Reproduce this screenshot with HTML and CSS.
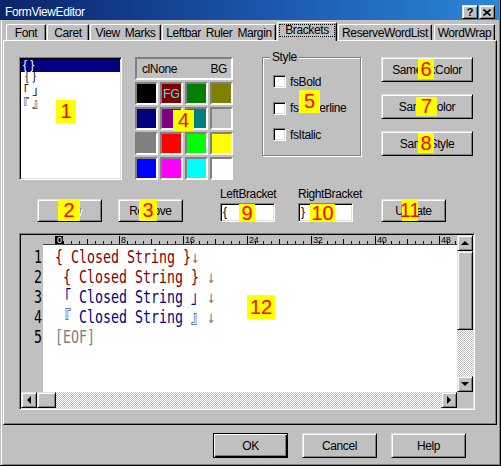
FILE: index.html
```html
<!DOCTYPE html>
<html lang="en">
<head>
    <meta charset="UTF-8">
    <title>FormViewEditor</title>
    <link rel="stylesheet" href="styles.css">
</head>
<body>
<div class="window">
    <div class="titlebar">
        <span class="title">FormViewEditor</span>
        <span class="cap-btn raised">?</span>
        <span class="cap-btn raised">
            <svg width="8" height="7" viewBox="0 0 8 7"><path d="M0.5 0.5 L7.5 6.5 M7.5 0.5 L0.5 6.5" stroke="#000" stroke-width="1.6" fill="none"/></svg>
        </span>
    </div>

    <div class="tabs">
        <div class="tab tab-font">Font</div>
        <div class="tab tab-caret">Caret</div>
        <div class="tab tab-marks">View Marks</div>
        <div class="tab tab-margin">Leftbar Ruler Margin</div>
        <div class="tab tab-brackets tab-on"><span class="focus">Brackets</span></div>
        <div class="tab tab-words">ReserveWordList</div>
        <div class="tab tab-wrap">WordWrap</div>
    </div>

    <div class="page">
        <div class="top-row">
            <div class="listbox sunken">
                <div class="item item-on">{ }</div>
                <div class="item item-cjk">｛ ｝</div>
                <div class="item item-cjk">「 」</div>
                <div class="item item-cjk">『 』</div>
            </div>

            <div class="palette">
                <div class="palette-head"><span>clNone</span><span>BG</span></div>
                <div class="swatches">
                    <div class="swatch sw-black"></div>
                    <div class="swatch sw-maroon">FG</div>
                    <div class="swatch sw-green"></div>
                    <div class="swatch sw-olive"></div>
                    <div class="swatch sw-navy"></div>
                    <div class="swatch sw-purple"></div>
                    <div class="swatch sw-teal"></div>
                    <div class="swatch sw-silver"></div>
                    <div class="swatch sw-gray"></div>
                    <div class="swatch sw-red"></div>
                    <div class="swatch sw-lime"></div>
                    <div class="swatch sw-yellow"></div>
                    <div class="swatch sw-blue"></div>
                    <div class="swatch sw-fuchsia"></div>
                    <div class="swatch sw-aqua"></div>
                    <div class="swatch sw-white"></div>
                </div>
            </div>

            <div class="group">
                <span class="group-title">Style</span>
                <div class="check"><span class="check-box"></span>fsBold</div>
                <div class="check"><span class="check-box"></span>fsUnderline</div>
                <div class="check"><span class="check-box"></span>fsItalic</div>
            </div>

            <div class="side-buttons">
                <div class="btn raised">SameBkColor</div>
                <div class="btn raised">SameColor</div>
                <div class="btn raised">SameStyle</div>
            </div>
        </div>

        <div class="mid-row">
            <div class="btn raised btn-new disabled">New</div>
            <div class="btn raised btn-remove">Remove</div>
            <div class="field field-left">
                <div class="field-label">LeftBracket</div>
                <div class="edit sunken">{</div>
            </div>
            <div class="field field-right">
                <div class="field-label">RightBracket</div>
                <div class="edit sunken">}</div>
            </div>
            <div class="btn raised btn-update">Update</div>
        </div>

        <div class="editor sunken">
            <div class="ed-view">
                <div class="gutter">
                    <div class="mono gutter-nums">
                        <div class="line">1</div>
                        <div class="line">2</div>
                        <div class="line">3</div>
                        <div class="line">4</div>
                        <div class="line">5</div>
                    </div>
                </div>
                <div class="ruler">
                    <span class="rmark"><b class="rzero">0</b></span>
                    <span class="rmark">8</span>
                    <span class="rmark">16</span>
                    <span class="rmark">24</span>
                    <span class="rmark">32</span>
                    <span class="rmark">40</span>
                    <span class="rmark">48</span>
                </div>
                <div class="text">
                    <div class="mono code">
                        <div class="line c-red">{ Closed String }<span class="eol">↓</span></div>
                        <div class="line c-red"> { Closed String } <span class="eol">↓</span></div>
                        <div class="line c-blue"><span class="wide open">「</span> Closed String <span class="wide close">」</span><span class="eol">↓</span></div>
                        <div class="line c-blue"><span class="wide open">『</span> Closed String <span class="wide close">』</span><span class="eol">↓</span></div>
                        <div class="line eol">[EOF]</div>
                    </div>
                </div>
            </div>
            <div class="vscroll">
                <div class="sb-btn raised arr-up"></div>
                <div class="vthumb raised"></div>
                <div class="track"></div>
                <div class="sb-btn raised arr-down"></div>
            </div>
            <div class="hscroll">
                <div class="sb-btn raised arr-left"></div>
                <div class="hthumb raised"></div>
                <div class="track"></div>
                <div class="sb-btn raised arr-right"></div>
            </div>
            <div class="corner"></div>
        </div>
    </div>

    <div class="footer">
        <div class="btn raised btn-default">OK</div>
        <div class="btn raised">Cancel</div>
        <div class="btn raised">Help</div>
    </div>

    <!-- callout numbers -->
    <span class="tag tag-1">1</span>
    <span class="tag tag-2">2</span>
    <span class="tag tag-3">3</span>
    <span class="tag tag-4">4</span>
    <span class="tag tag-5">5</span>
    <span class="tag tag-6">6</span>
    <span class="tag tag-7">7</span>
    <span class="tag tag-8">8</span>
    <span class="tag tag-9">9</span>
    <span class="tag tag-10">10</span>
    <span class="tag tag-11">11</span>
    <span class="tag tag-12">12</span>
</div>
</body>
</html>
```

FILE: styles.css
```css
* {
    box-sizing: border-box;
}

body {
    margin: 0;
    background: #c0c0c0;
    font-family: "Liberation Sans", "Noto Sans CJK JP", sans-serif;
    font-size: 12px;
    letter-spacing: -0.4px;
    word-spacing: 2px;
    color: #000;
}

.window {
    position: relative;
    width: 501px;
    height: 466px;
    background: #c0c0c0;
    border-right: 1px solid #000;
    border-bottom: 1px solid #000;
    box-shadow: inset 1px 0 #c0c0c0, inset 2px 0 #fff, inset -1px -1px #808080;
}

/* 3d borders */
.raised {
    background: #c0c0c0;
    border: 1px solid;
    border-color: #dfdfdf #000 #000 #dfdfdf;
    box-shadow: inset 1px 1px #fff, inset -1px -1px #808080;
}

.sunken {
    border: 1px solid;
    border-color: #808080 #fff #fff #808080;
    box-shadow: inset 1px 1px #000, inset -1px -1px #dfdfdf;
    padding: 1px;
}

/* title bar */
.titlebar {
    display: flex;
    align-items: flex-start;
    height: 20px;
    margin-right: 1px;
    padding-right: 4px;
    background: linear-gradient(to right, #0a246a, #1b58ad 55%, #2c86d6);
    color: #fff;
}

.title {
    flex: 1;
    margin: 3px 0 0 5px;
    line-height: 18px;
}

.cap-btn {
    display: flex;
    align-items: center;
    justify-content: center;
    width: 16px;
    height: 14px;
    margin: 5px 0 0 1px;
    color: #000;
    font-weight: bold;
    font-size: 11px;
    letter-spacing: 0;
}

/* tabs */
.tabs {
    position: relative;
    z-index: 1;
    display: flex;
    align-items: flex-end;
    height: 20px;
    padding-left: 6px;
}

.tab {
    height: 16px;
    margin-right: 1px;
    padding-top: 1px;
    border-top: 1px solid #fff;
    border-left: 1px solid #fff;
    border-right: 1px solid #000;
    border-radius: 2px 2px 0 0;
    box-shadow: inset -1px 0 #808080;
    text-align: center;
    line-height: 14px;
    white-space: nowrap;
}

.tab-font { width: 40px; }
.tab-caret { width: 42px; }
.tab-marks { width: 71px; }
.tab-margin { width: 114px; }
.tab-brackets { width: 60px; }
.tab-words { width: 94px; margin-right: 2px; }
.tab-wrap { width: 61px; }

.tab-on {
    height: 19px;
    margin-bottom: -1px;
    padding-top: 0;
    background: #c0c0c0;
}

.tab-on .focus {
    display: block;
    margin: 1px 1px 0;
    border: 1px dotted #000;
    line-height: 11px;
}

/* page */
.page {
    height: 385px;
    margin: 0 3px;
    padding: 16px 0 0 15px;
    border: 1px solid;
    border-color: #fff #000 #000 #fff;
    box-shadow: inset -1px -1px #808080;
}

.top-row {
    display: flex;
    align-items: flex-start;
}

.listbox {
    width: 103px;
    height: 123px;
    margin-right: 13px;
    background: #fff;
}

.item {
    height: 13px;
    padding-left: 2px;
    line-height: 13px;
    white-space: pre;
    word-spacing: 0;
    letter-spacing: 0;
}

.item-on {
    background: #000080;
    color: #fff;
}

.item-cjk {
    text-indent: -6px;
}

.palette {
    width: 98px;
    margin-right: 29px;
}

.palette-head {
    display: flex;
    justify-content: space-between;
    align-items: center;
    height: 23px;
    margin-bottom: 2px;
    padding: 0 4px 0 5px;
    border: 2px solid;
    border-color: #808080 #fff #fff #808080;
}

.swatches {
    display: grid;
    grid-template-columns: repeat(4, 23px);
    grid-auto-rows: 23px;
    gap: 2px;
}

.swatch {
    display: flex;
    align-items: center;
    justify-content: center;
    border: 2px solid;
    border-color: #808080 #fff #fff #808080;
    color: #00ffff;
    letter-spacing: 0;
}

.sw-black { background: #000; }
.sw-maroon { background: #800000; }
.sw-green { background: #008000; }
.sw-olive { background: #808000; }
.sw-navy { background: #000080; }
.sw-purple { background: #800080; }
.sw-teal { background: #008080; }
.sw-silver { background: #c0c0c0; }
.sw-gray { background: #808080; }
.sw-red { background: #ff0000; }
.sw-lime { background: #00ff00; }
.sw-yellow { background: #ffff00; }
.sw-blue { background: #0000ff; }
.sw-fuchsia { background: #ff00ff; }
.sw-aqua { background: #00ffff; }
.sw-white { background: #fff; }

.group {
    position: relative;
    display: flex;
    flex-direction: column;
    gap: 13.5px;
    width: 99px;
    height: 99px;
    margin-right: 20px;
    padding: 17px 0 0 10px;
    border: 1px solid #808080;
    box-shadow: inset 1px 1px #fff, 1px 1px #fff;
}

.group-title {
    position: absolute;
    top: -8px;
    left: 7px;
    padding: 0 2px;
    background: #c0c0c0;
    line-height: 14px;
}

.check {
    display: flex;
    align-items: center;
    gap: 4px;
    height: 13px;
}

.check-box {
    width: 13px;
    height: 13px;
    background: #fff;
    border: 1px solid;
    border-color: #808080 #fff #fff #808080;
    box-shadow: inset 1px 1px #000, inset -1px -1px #dfdfdf;
}

.side-buttons {
    display: flex;
    flex-direction: column;
    gap: 12px;
    width: 92px;
}

.btn {
    display: flex;
    align-items: center;
    justify-content: center;
    height: 25px;
    white-space: nowrap;
}

.disabled {
    color: #808080;
    text-shadow: 1px 1px #fff;
}

/* second row */
.mid-row {
    display: flex;
    align-items: flex-end;
    margin-top: 7px;
    padding-left: 18px;
}

.mid-row .btn {
    width: 65px;
    height: 23px;
}

.btn-new { margin-right: 16px; }
.btn-remove { margin-right: 37px; }

.field {
    width: 55px;
}

.field-left { margin-right: 23px; }
.field-right { margin-right: 28px; }

.field-label {
    height: 14px;
    margin-bottom: 2px;
    line-height: 14px;
    white-space: nowrap;
}

.edit {
    height: 19px;
    padding-left: 2px;
    background: #fff;
    line-height: 15px;
}

/* editor */
.editor {
    display: grid;
    grid-template-columns: 436px 16px;
    grid-template-rows: 157px 16px;
    width: 456px;
    height: 177px;
    margin-top: 11px;
    background: #c0c0c0;
}

.ed-view {
    display: grid;
    grid-template-columns: 22px 1fr;
    grid-template-rows: 10px 1fr;
    overflow: hidden;
}

.gutter {
    grid-row: 1 / 3;
    padding-top: 12px;
    background: #c0c0c0;
}

.ruler {
    display: flex;
    padding: 1px 0 0 12px;
    border-bottom: 1px solid #404040;
    overflow: hidden;
    background-color: #c0c0c0;
    background-image:
        repeating-linear-gradient(to right, #000 0 1px, transparent 1px 8px),
        repeating-linear-gradient(to right, #000 0 1px, transparent 1px 64px);
    background-size: 100% 3px, 100% 5px;
    background-position: 12px 100%, 44px 100%;
    background-repeat: no-repeat;
}

.rmark {
    flex: 0 0 64px;
    height: 8px;
    padding-left: 1px;
    border-left: 1px solid #000;
    font-size: 9px;
    line-height: 8px;
    letter-spacing: -0.3px;
}

.rzero {
    display: inline-block;
    width: 8px;
    margin-left: -2px;
    padding-left: 2px;
    background: #000;
    color: #fff;
    font-weight: normal;
}

.text {
    padding: 2px 0 0 12px;
    background: #fff;
    overflow: hidden;
}

.mono {
    font-family: "DejaVu Sans Mono", monospace;
    font-size: 17px;
    letter-spacing: 0;
    word-spacing: 0;
    transform: scaleX(0.78125);
    transform-origin: 0 0;
}

.gutter-nums {
    padding-right: 1.3px;
    text-align: right;
    transform-origin: 100% 0;
}

.line {
    height: 20px;
    line-height: 20px;
    white-space: pre;
}

.c-red { color: #800000; }
.c-blue { color: #000080; }
.eol { color: #808080; }

.wide {
    display: inline-block;
    width: 20.48px;
    font-family: "Noto Sans CJK JP", sans-serif;
    line-height: 17px;
}

.wide.open { text-align: right; }
.wide.close { text-align: left; }

/* scrollbars */
.vscroll {
    display: flex;
    flex-direction: column;
}

.hscroll {
    display: flex;
}

.sb-btn {
    display: flex;
    align-items: center;
    justify-content: center;
    width: 16px;
    height: 16px;
    flex: none;
}

.sb-btn::before {
    content: "";
    border: 4px solid transparent;
}

.arr-up::before { border-top: 0; border-bottom-color: #000; }
.arr-down::before { border-bottom: 0; border-top-color: #000; }
.arr-left::before { border-left: 0; border-right-color: #000; }
.arr-right::before { border-right: 0; border-left-color: #000; }

.vthumb {
    height: 79px;
    flex: none;
}

.hthumb {
    width: 19px;
    flex: none;
}

.track {
    flex: 1;
    background: repeating-conic-gradient(#c0c0c0 0 25%, #fff 0 50%) 0 0 / 2px 2px;
}

.corner {
    background: #c0c0c0;
}

/* footer */
.footer {
    display: flex;
    gap: 14px;
    margin-top: 8px;
    padding-left: 213px;
}

.footer .btn {
    width: 75px;
}

.btn-default {
    border-color: #000;
    box-shadow: inset 1px 1px #fff, inset -1px -1px #000, inset -2px -2px #808080;
}

/* numbered callouts */
.tag {
    position: absolute;
    display: flex;
    align-items: center;
    justify-content: center;
    background: #ffff00;
    color: #ff0000;
    font-size: 20px;
    letter-spacing: 0;
}

.tag-1 { left: 56px; top: 100px; width: 20px; height: 23px; }
.tag-2 { left: 58px; top: 199px; width: 22px; height: 22px; }
.tag-3 { left: 139px; top: 199px; width: 18px; height: 22px; }
.tag-4 { left: 173px; top: 110px; width: 21px; height: 21px; }
.tag-5 { left: 299px; top: 90px; width: 21px; height: 23px; }
.tag-6 { left: 418px; top: 59px; width: 16px; height: 20px; }
.tag-7 { left: 416px; top: 97px; width: 21px; height: 19px; }
.tag-8 { left: 418px; top: 133px; width: 16px; height: 20px; }
.tag-9 { left: 239px; top: 204px; width: 16px; height: 18px; }
.tag-10 { left: 310px; top: 204px; width: 25px; height: 18px; }
.tag-11 { left: 402px; top: 200px; width: 16px; height: 21px; }
.tag-12 { left: 247px; top: 295px; width: 28px; height: 24px; }
```
